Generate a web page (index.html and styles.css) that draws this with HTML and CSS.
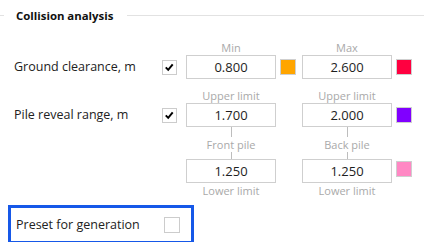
FILE: index.html
```html
<!DOCTYPE html>
<html lang="en">
<head>
<meta charset="UTF-8">
<title>Collision analysis</title>
<link rel="stylesheet" href="styles.css">
</head>
<body>
<div class="group-header">
  <span class="rule rule-left"></span>
  <span class="group-title">Collision analysis</span>
  <span class="rule rule-right"></span>
</div>

<!-- min / max clearance -->
<div class="row row-ground">
  <div class="row-label">Ground clearance, m</div>
  <div class="line-cell">
    <span class="check"><svg viewBox="0 0 15 15" width="13" height="13"><path d="M3.2 7.4 L6 10.2 L11.2 4" fill="none" stroke="#000" stroke-width="2.3"/></svg></span>
  </div>
  <div class="field">
    <div class="caption">Min</div>
    <div class="value-box">0.800</div>
  </div>
  <div class="line-cell swatch-cell"><span class="swatch swatch-orange"></span></div>
  <div class="field field-second">
    <div class="caption">Max</div>
    <div class="value-box">2.600</div>
  </div>
  <div class="line-cell swatch-cell"><span class="swatch swatch-red"></span></div>
</div>

<!-- pile reveal range -->
<div class="row row-pile">
  <div class="row-label">Pile reveal range, m</div>
  <div class="line-cell">
    <span class="check"><svg viewBox="0 0 15 15" width="13" height="13"><path d="M3.2 7.4 L6 10.2 L11.2 4" fill="none" stroke="#000" stroke-width="2.3"/></svg></span>
  </div>
  <div class="field">
    <div class="caption">Upper limit</div>
    <div class="value-box">1.700</div>
    <div class="link link-long"></div>
    <div class="caption">Front pile</div>
    <div class="link link-short"></div>
    <div class="value-box">1.250</div>
    <div class="caption">Lower limit</div>
  </div>
  <div class="spacer"></div>
  <div class="field field-second">
    <div class="caption">Upper limit</div>
    <div class="value-box">2.000</div>
    <div class="link link-long"></div>
    <div class="caption">Back pile</div>
    <div class="link link-short"></div>
    <div class="value-box">1.250</div>
    <div class="caption">Lower limit</div>
  </div>
  <div class="swatch-stack">
    <div class="line-cell"><span class="swatch swatch-purple"></span></div>
    <div class="line-cell lower"><span class="swatch swatch-pink"></span></div>
  </div>
</div>

<div class="preset-box">
  <div class="preset-label">Preset for generation</div>
  <span class="check empty"></span>
</div>
</body>
</html>
```

FILE: styles.css
```css
body {
  margin: 0;
  width: 424px;
  height: 242px;
  overflow: hidden;
  background: #ffffff;
  font-family: "Open Sans", "Noto Sans", sans-serif;
  font-size: 12.5px;
  color: #222222;
}

/* header with rule on both sides */
.group-header {
  display: flex;
  align-items: center;
  height: 30px;
}
.rule {
  height: 1px;
  background: #e2e2e2;
  margin-top: 1px;
}
.rule-left {
  width: 4px;
}
.rule-right {
  flex: 1;
}
.group-title {
  padding: 0 14px 0 12px;
  font-weight: 700;
  font-size: 11.4px;
  color: #111111;
}

/* rows */
.row {
  display: flex;
  align-items: flex-start;
  padding-left: 14px;
}
.row-ground {
  margin-top: 10px;
}
.row-pile {
  margin-top: 9px;
}
.row-label {
  width: 148px;
  margin-top: 15px;
  line-height: 24px;
}
.line-cell {
  height: 24px;
  margin-top: 15px;
  display: flex;
  align-items: center;
}
.field {
  display: flex;
  flex-direction: column;
  align-items: center;
  width: 90px;
  margin-left: 9px;
}
.field-second {
  margin-left: 6px;
}
.swatch-cell,
.swatch-stack {
  margin-left: 4px;
}
.spacer {
  width: 20px;
}
.caption {
  height: 15px;
  line-height: 15px;
  font-size: 11px;
  color: #a9a9a9;
}
.value-box {
  box-sizing: border-box;
  width: 90px;
  height: 24px;
  border: 1px solid #cfcfcf;
  line-height: 22px;
  text-align: center;
  font-size: 13px;
  color: #1e1e1e;
}
.link {
  width: 1px;
  background: #bdbdbd;
}
.link-long {
  height: 10px;
}
.link-short {
  height: 7px;
}
.swatch-stack .lower {
  margin-top: 30px;
}
.swatch {
  box-sizing: border-box;
  display: block;
  width: 16px;
  height: 16px;
  border: 1px solid #cfcfcf;
}
.swatch-orange { background: #ffa500; }
.swatch-red { background: #ff0040; }
.swatch-purple { background: #8000ff; }
.swatch-pink { background: #ff88c4; }

/* checkbox */
.check {
  box-sizing: border-box;
  display: flex;
  align-items: center;
  justify-content: center;
  width: 15px;
  height: 15px;
  border: 1px solid #cccccc;
}

/* preset */
.preset-box {
  box-sizing: border-box;
  display: flex;
  align-items: center;
  width: 186px;
  height: 39px;
  margin: 7px 0 0 8px;
  padding-left: 5px;
  border: 3px solid #1658e8;
}
.preset-label {
  width: 148px;
}
.preset-box .check {
  width: 16px;
  height: 16px;
}
```
